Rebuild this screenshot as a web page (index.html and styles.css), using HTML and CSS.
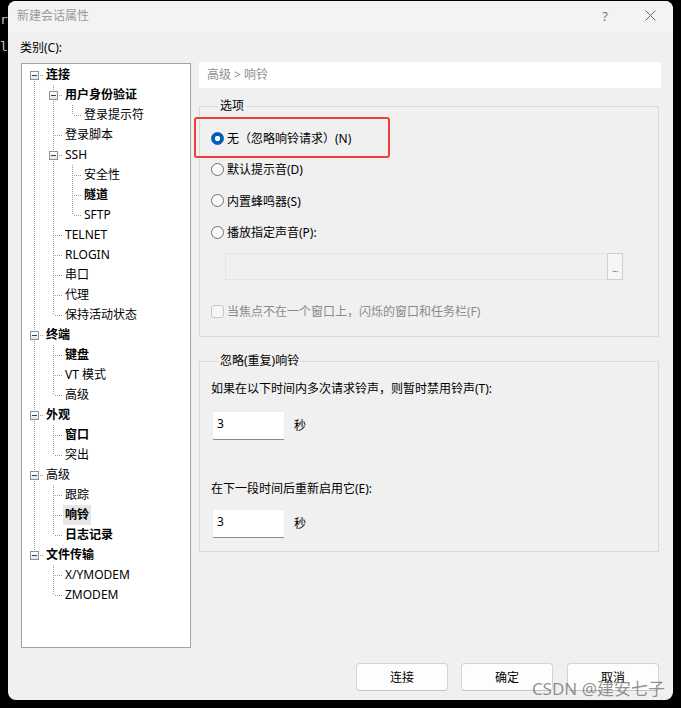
FILE: index.html
```html
<!DOCTYPE html>
<html lang="zh-CN">
<head>
<meta charset="utf-8">
<title>新建会话属性</title>
<link rel="stylesheet" href="styles.css">
</head>
<body>
<div class="term"><div>r</div><div>l]</div></div>
<div class="window">
  <div class="titlebar">
    <span class="title">新建会话属性</span>
    <span class="help">?</span>
    <span class="close"><svg width="11" height="11" viewBox="0 0 11 11"><path d="M0.5 0.5L10.5 10.5M10.5 0.5L0.5 10.5" stroke="#6a6a6a" stroke-width="1" fill="none"/></svg></span>
  </div>
  <div class="content">
    <div class="cat-label">类别(C):</div>
    <div class="tree">
      <div class="row"><span class="c first"><i class="exp"></i></span><span class="t b">连接</span></div>
      <div class="row"><span class="g v"></span><span class="c mid"><i class="exp"></i></span><span class="t b">用户身份验证</span></div>
      <div class="row"><span class="g v"></span><span class="g v"></span><span class="c last"></span><span class="t">登录提示符</span></div>
      <div class="row"><span class="g v"></span><span class="c mid"></span><span class="t">登录脚本</span></div>
      <div class="row"><span class="g v"></span><span class="c mid"><i class="exp"></i></span><span class="t">SSH</span></div>
      <div class="row"><span class="g v"></span><span class="g v"></span><span class="c mid"></span><span class="t">安全性</span></div>
      <div class="row"><span class="g v"></span><span class="g v"></span><span class="c mid"></span><span class="t b">隧道</span></div>
      <div class="row"><span class="g v"></span><span class="g v"></span><span class="c last"></span><span class="t">SFTP</span></div>
      <div class="row"><span class="g v"></span><span class="c mid"></span><span class="t">TELNET</span></div>
      <div class="row"><span class="g v"></span><span class="c mid"></span><span class="t">RLOGIN</span></div>
      <div class="row"><span class="g v"></span><span class="c mid"></span><span class="t">串口</span></div>
      <div class="row"><span class="g v"></span><span class="c mid"></span><span class="t">代理</span></div>
      <div class="row"><span class="g v"></span><span class="c last"></span><span class="t">保持活动状态</span></div>
      <div class="row"><span class="c mid"><i class="exp"></i></span><span class="t b">终端</span></div>
      <div class="row"><span class="g v"></span><span class="c mid"></span><span class="t b">键盘</span></div>
      <div class="row"><span class="g v"></span><span class="c mid"></span><span class="t">VT 模式</span></div>
      <div class="row"><span class="g v"></span><span class="c last"></span><span class="t">高级</span></div>
      <div class="row"><span class="c mid"><i class="exp"></i></span><span class="t b">外观</span></div>
      <div class="row"><span class="g v"></span><span class="c mid"></span><span class="t b">窗口</span></div>
      <div class="row"><span class="g v"></span><span class="c last"></span><span class="t">突出</span></div>
      <div class="row"><span class="c mid"><i class="exp"></i></span><span class="t">高级</span></div>
      <div class="row"><span class="g v"></span><span class="c mid"></span><span class="t">跟踪</span></div>
      <div class="row"><span class="g v"></span><span class="c mid"></span><span class="t b sel">响铃</span></div>
      <div class="row"><span class="g v"></span><span class="c last"></span><span class="t b">日志记录</span></div>
      <div class="row"><span class="c last"><i class="exp"></i></span><span class="t b">文件传输</span></div>
      <div class="row"><span class="g"></span><span class="c mid"></span><span class="t">X/YMODEM</span></div>
      <div class="row"><span class="g"></span><span class="c last"></span><span class="t">ZMODEM</span></div>
    </div>
    <div class="panel">
      <div class="crumb">高级 &gt; 响铃</div>
      <fieldset class="group g1">
        <legend>选项</legend>
        <div class="opts">
          <div class="opt"><span class="radio on"></span><span>无（忽略响铃请求）(N)</span></div>
          <div class="opt"><span class="radio"></span><span>默认提示音(D)</span></div>
          <div class="opt"><span class="radio"></span><span>内置蜂鸣器(S)</span></div>
          <div class="opt"><span class="radio"></span><span>播放指定声音(P):</span></div>
        </div>
        <div class="pathbox"><span class="path"></span><span class="dots">...</span></div>
        <div class="chk-row"><span class="chk"></span><span>当焦点不在一个窗口上，闪烁的窗口和任务栏(F)</span></div>
      </fieldset>
      <fieldset class="group g2">
        <legend>忽略(重复)响铃</legend>
        <div class="line first">如果在以下时间内多次请求铃声，则暂时禁用铃声(T):</div>
        <div class="num-row"><span class="num">3</span><span class="unit">秒</span></div>
        <div class="line second">在下一段时间后重新启用它(E):</div>
        <div class="num-row n2"><span class="num">3</span><span class="unit">秒</span></div>
      </fieldset>
    </div>
  </div>
  <div class="footer">
    <button class="btn">连接</button>
    <button class="btn">确定</button>
    <button class="btn">取消</button>
  </div>
  <div class="mark"></div>
  <div class="watermark">CSDN @建安七子</div>
</div>
</body>
</html>
```
FILE: styles.css
```css
* { box-sizing: border-box; }
html, body { margin: 0; padding: 0; }
body {
  background: #000;
  width: 681px;
  height: 708px;
  overflow: hidden;
  display: flex;
  align-items: flex-start;
  font-family: "Noto Sans", "Noto Sans CJK SC", sans-serif;
  font-size: 12px;
  color: #000;
}
.term {
  width: 8px;
  overflow: hidden;
  white-space: nowrap;
  font-family: "DejaVu Sans Mono", monospace;
  font-size: 13px;
  line-height: 27px;
  padding-top: 6px;
  color: #b8c6dc;
}
.window {
  position: relative;
  margin-top: 1px;
  width: 665px;
  height: 699px;
  background: #f0f0f0;
  border-radius: 8px;
  display: flex;
  flex-direction: column;
  overflow: hidden;
}
.titlebar {
  height: 31px;
  background: #f3f3f3;
  display: flex;
  align-items: center;
  padding: 0 13px 2px 9px;
  flex-shrink: 0;
}
.title {
  flex: 1;
  color: #9a9a9a;
  font-size: 12px;
  line-height: 16px;
}
.help {
  width: 20px;
  text-align: center;
  color: #7a7a7a;
  font-size: 13px;
  margin-right: 25px;
}
.close {
  width: 20px;
  height: 20px;
  display: flex;
  align-items: center;
  justify-content: center;
}
.content {
  display: grid;
  grid-template-columns: 170px 462px;
  grid-template-rows: 31px 585px;
  column-gap: 8px;
  padding: 0 12px 0 13px;
}
.cat-label {
  grid-column: 1;
  grid-row: 1;
  line-height: 20px;
  margin-top: 6px;
  margin-left: -1px;
}
.tree {
  grid-column: 1;
  grid-row: 2;
  background: #fff;
  border: 1px solid #a3a3a3;
  padding-left: 3px;
  padding-top: 1px;
  --dv: repeating-linear-gradient(to bottom, #9c9c9c 0 1px, transparent 1px 2px);
  --dh: repeating-linear-gradient(to right, #9c9c9c 0 1px, transparent 1px 2px);
}
.row {
  display: flex;
  align-items: center;
  height: 20px;
}
.g, .c {
  width: 19px;
  height: 20px;
  flex-shrink: 0;
  display: flex;
  align-items: center;
}
.g.v { background: var(--dv) 9px 0 / 1px 100% no-repeat; }
.c.mid {
  background: var(--dh) 11px 10px / 8px 1px no-repeat, var(--dv) 9px 0 / 1px 100% no-repeat;
}
.c.last {
  background: var(--dh) 11px 10px / 8px 1px no-repeat, var(--dv) 9px 0 / 1px 10px no-repeat;
}
.c.first {
  background: var(--dh) 11px 10px / 8px 1px no-repeat, var(--dv) 9px 10px / 1px 10px no-repeat;
}
.exp {
  display: block;
  width: 9px;
  height: 9px;
  margin-left: 5px;
  margin-top: 1px;
  border: 1px solid #8f8f8f;
  background: linear-gradient(#1e3f86, #1e3f86) center / 5px 1px no-repeat, linear-gradient(#ffffff, #e4e4e4);
}
.t {
  padding: 0 2px;
  height: 20px;
  line-height: 20px;
  white-space: nowrap;
}
.t.b { font-weight: 700; }
.t.sel { background: #e6e6e6; }
.panel {
  grid-column: 2;
  grid-row: 2;
  margin-top: -1px;
  display: flex;
  flex-direction: column;
}
.crumb {
  height: 26px;
  line-height: 26px;
  background: #fff;
  color: #8e8e8e;
  padding-left: 8px;
}
.group {
  margin: 0;
  width: 460px;
  border: 1px solid #d9d9d9;
  padding: 0 11px;
  min-width: 0;
}
.group legend {
  margin-left: 7px;
  padding: 0 2px;
  line-height: 16px;
  height: 16px;
}
.g1 { margin-top: 10px; padding-bottom: 15px; }
.g2 { margin-top: 16px; padding-bottom: 13px; }
.opts {
  display: flex;
  flex-direction: column;
  gap: 11px;
  margin-top: 14px;
}
.opt {
  display: flex;
  align-items: center;
  height: 20px;
  gap: 3px;
  white-space: nowrap;
}
.opt + .opt { margin-top: 0.4px; }
.radio {
  width: 13px;
  height: 13px;
  border-radius: 50%;
  border: 1px solid #6f6f6f;
  background: #f8f8f8;
  flex-shrink: 0;
}
.radio.on {
  border-color: #005fb8;
  background: radial-gradient(circle, #ffffff 0 2.4px, #005fb8 3px);
}
.pathbox {
  display: flex;
  margin: 11px 0 0 14px;
  width: 398px;
  height: 27px;
}
.path {
  flex: 1;
  border: 1px solid #e4e4e4;
  border-right: none;
  background: #f0f0f0;
}
.dots {
  width: 16px;
  border: 1px solid #cfcfcf;
  background: #f6f6f6;
  color: #555;
  font-size: 9px;
  line-height: 9px;
  display: flex;
  align-items: flex-end;
  justify-content: center;
  padding-bottom: 6px;
  letter-spacing: -0.5px;
}
.chk-row {
  display: flex;
  align-items: center;
  gap: 3px;
  height: 20px;
  margin-top: 21px;
  color: #8a8a8a;
  white-space: nowrap;
}
.chk {
  width: 13px;
  height: 13px;
  border: 1px solid #c6c6c6;
  border-radius: 3px;
  background: #f6f6f6;
  flex-shrink: 0;
}
.line {
  height: 20px;
  line-height: 20px;
  white-space: nowrap;
}
.line.first { margin-top: 10px; }
.line.second { margin-top: 39px; }
.num-row {
  display: flex;
  align-items: center;
  margin-top: 12px;
  margin-left: 1px;
}
.num-row.n2 { margin-top: 10px; }
.num {
  width: 73px;
  height: 29px;
  background: #fff;
  border: 1px solid #ececec;
  border-bottom: 1px solid #8a8a8a;
  border-radius: 2px;
  padding: 5px 4px 0;
  line-height: 14px;
}
.unit {
  margin-left: 9px;
  line-height: 20px;
}
.footer {
  margin-top: auto;
  display: flex;
  justify-content: flex-end;
  gap: 13px;
  padding: 0 14px 9px 0;
}
.btn {
  width: 92px;
  height: 28px;
  background: #fdfdfd;
  border: 1px solid #d3d3d3;
  border-bottom-color: #c2c2c2;
  border-radius: 4px;
  font-family: "Noto Sans", "Noto Sans CJK SC", sans-serif;
  font-size: 12px;
  color: #000;
  padding: 0;
}
.btn:nth-child(2) { margin-right: 1px; }
.mark {
  position: absolute;
  left: 186px;
  top: 116px;
  width: 196px;
  height: 41px;
  border: 2px solid #f23d3d;
  border-radius: 3px;
}
.watermark {
  position: absolute;
  right: 8px;
  bottom: 1px;
  font-family: "Noto Sans", "Noto Sans CJK SC", sans-serif;
  font-size: 17px;
  line-height: 20px;
  color: rgba(105, 105, 105, 0.72);
  white-space: nowrap;
}
```
